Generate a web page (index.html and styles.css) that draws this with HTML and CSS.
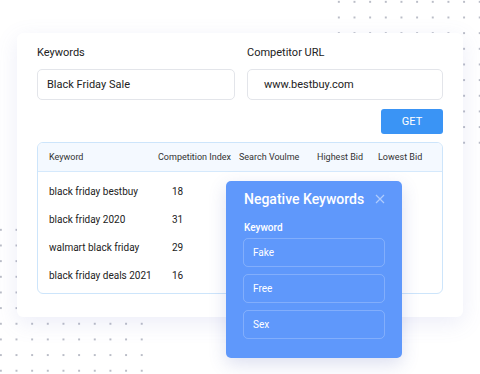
FILE: index.html
```html
<!DOCTYPE html>
<html lang="en">

<head>
    <meta charset="UTF-8" />
    <meta name="viewport" content="width=device-width, initial-scale=1.0" />
    <title>Keyword Research</title>
    <link rel="stylesheet" href="styles.css">
</head>

<body>
    <div class="page">
        <div class="dots dots-top"></div>
        <div class="dots dots-bottom"></div>

        <div class="card">
            <div class="fields">
                <div class="field">
                    <label class="label" for="keywords">Keywords</label>
                    <div class="input" id="keywords">Black Friday Sale</div>
                </div>
                <div class="field">
                    <label class="label" for="url">Competitor URL</label>
                    <div class="input input-url" id="url">www.bestbuy.com</div>
                </div>
            </div>
            <div class="actions">
                <button class="get-btn" type="button">GET</button>
            </div>

            <div class="table">
                <div class="row head">
                    <span>Keyword</span>
                    <span>Competition Index</span>
                    <span>Search Voulme</span>
                    <span>Highest Bid</span>
                    <span>Lowest Bid</span>
                </div>
                <div class="body">
                    <div class="row">
                        <span>black friday bestbuy</span>
                        <span class="num">18</span>
                    </div>
                    <div class="row">
                        <span>black friday 2020</span>
                        <span class="num">31</span>
                    </div>
                    <div class="row">
                        <span>walmart black friday</span>
                        <span class="num">29</span>
                    </div>
                    <div class="row">
                        <span>black friday deals 2021</span>
                        <span class="num">16</span>
                    </div>
                </div>
            </div>
        </div>

        <div class="popup">
            <div class="popup-head">
                <h2 class="popup-title">Negative Keywords</h2>
                <svg class="close" width="10" height="10" viewBox="0 0 10 10">
                    <path d="M1 1 L9 9 M9 1 L1 9" stroke="rgba(255,255,255,0.5)" stroke-width="1.2" fill="none" />
                </svg>
            </div>
            <div class="popup-label">Keyword</div>
            <div class="neg-list">
                <div class="neg-input">Fake</div>
                <div class="neg-input">Free</div>
                <div class="neg-input">Sex</div>
            </div>
        </div>
    </div>
</body>

</html>
```

FILE: styles.css
```css
body {
    margin: 0;
    font-family: Roboto, "Liberation Sans", Arial, sans-serif;
    color: #222;
    background: #fff;
}

.page {
    position: relative;
    width: 480px;
    height: 374px;
    overflow: hidden;
    padding-top: 33px;
    box-sizing: border-box;
}

/* decorative dot grids behind the card */
.dots {
    position: absolute;
    width: 157px;
    height: 157px;
    background-image: radial-gradient(circle, #babdc7 0.8px, transparent 1.3px);
    background-size: 15.67px 15.67px;
}

.dots-top {
    left: 331px;
    top: -6px;
}

.dots-bottom {
    left: -7px;
    top: 222px;
}

.card {
    position: relative;
    margin-left: 17px;
    width: 446px;
    height: 284px;
    box-sizing: border-box;
    padding: 13px 20px 0 20px;
    background: #fff;
    border-radius: 6px;
    box-shadow: 0 6px 22px rgba(105, 115, 200, 0.13);
}

.fields {
    display: grid;
    grid-template-columns: 198px 196px;
    gap: 12px;
}

.label {
    display: block;
    font-size: 11px;
    line-height: 14px;
    color: #222;
}

.input {
    margin-top: 9px;
    height: 31px;
    box-sizing: border-box;
    border: 1px solid #e3e5ea;
    border-radius: 5px;
    padding-left: 9px;
    font-size: 11px;
    line-height: 29px;
    color: #222;
}

.input-url {
    padding-left: 16px;
}

.actions {
    display: flex;
    justify-content: flex-end;
    margin-top: 9px;
}

.get-btn {
    width: 62px;
    height: 25px;
    border: none;
    border-radius: 3px;
    background: #3a94f5;
    color: #fff;
    font-family: inherit;
    font-size: 11px;
    padding: 0;
}

.table {
    margin-top: 8px;
    height: 152px;
    box-sizing: border-box;
    border: 1px solid #cde5fb;
    border-radius: 6px;
    overflow: hidden;
}

.row {
    display: grid;
    grid-template-columns: 109px 81px 78px 61px 1fr;
    align-items: center;
    padding-left: 11px;
    height: 28px;
    font-size: 10px;
    color: #222;
    white-space: nowrap;
}

.row.head {
    height: 28px;
    background: #f4f9ff;
    border-bottom: 1px solid #d5e9fc;
    font-size: 9px;
    color: #333;
}

.body {
    padding-top: 5px;
}

.num {
    padding-left: 14px;
}

.popup {
    position: absolute;
    left: 226px;
    top: 181px;
    width: 176px;
    height: 177px;
    box-sizing: border-box;
    padding: 9px 17px 0 17px;
    background: #5f98fb;
    border-radius: 5px;
    box-shadow: 0 6px 18px rgba(60, 80, 170, 0.18);
    color: #fff;
}

.popup-head {
    display: flex;
    align-items: center;
    justify-content: space-between;
    padding-left: 1px;
}

.popup-title {
    margin: 0;
    font-size: 14px;
    font-weight: 500;
    line-height: 18px;
}

.close {
    display: block;
}

.popup-label {
    margin-top: 13px;
    padding-left: 1px;
    font-size: 10px;
    font-weight: 500;
    line-height: 14px;
}

.neg-list {
    display: flex;
    flex-direction: column;
    gap: 7px;
    margin-top: 3px;
}

.neg-input {
    height: 29px;
    box-sizing: border-box;
    border: 1px solid rgba(255, 255, 255, 0.22);
    border-radius: 5px;
    padding-left: 9px;
    font-size: 10px;
    line-height: 27px;
    color: #fff;
}
```
